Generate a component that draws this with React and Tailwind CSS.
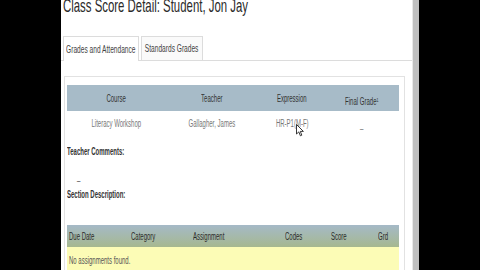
const T = ({ children, className = "" }) => (
  <span className={"inline-block whitespace-nowrap scale-x-[0.6] " + className}>{children}</span>
);

const Cursor = () => (
  <svg className="absolute left-[229px] top-[13px]" width="8" height="13" viewBox="0 0 8 13">
    <path d="M0.5 0.5 L0.5 10 L2.8 7.9 L4.4 11.8 L5.8 11.2 L4.3 7.4 L7.4 7.4 Z" fill="#fff" stroke="#222" strokeWidth="0.9" strokeLinejoin="round" />
  </svg>
);

export default function App() {
  return (
    <div className="w-[480px] h-[270px] bg-black flex overflow-hidden" style={{ fontFamily: '"Liberation Sans", Arial, sans-serif' }}>
      <div className="w-[61px] shrink-0" />

      <div className="w-[352px] shrink-0 bg-white flex flex-col border-r border-[#e8e8e8]">
        {/* title */}
        <div className="h-[19px] leading-[19px] -mt-[4px] pl-[2px] text-[19px] text-[#2a2a2a]">
          <T className="origin-left">Class Score Detail: Student, Jon Jay</T>
        </div>

        {/* tabs */}
        <div className="mt-[22px] flex items-end h-[24px] border-b border-[#dcdcdc]">
          <div className="ml-[2px] w-[76px] h-[25px] -mb-px bg-white border border-b-0 border-[#dcdcdc] flex items-center justify-center text-[11px] text-[#444]">
            <T className="origin-center">Grades and Attendance</T>
          </div>
          <div className="ml-[2px] w-[62px] h-[24px] bg-[#fafafa] border border-b-0 border-[#dcdcdc] flex items-center justify-center text-[11px] text-[#444]">
            <T className="origin-center">Standards Grades</T>
          </div>
        </div>

        {/* panel */}
        <div className="mt-[15px] ml-[3px] w-[341px] flex-1 border border-b-0 border-[#e2e2e2] pt-[8px] pl-[2px]">
          <div className="w-[332px]">
            <div className="grid grid-cols-[98px_94px_66px_74px] h-[26px] bg-[#a7bbc8] text-[10px] text-[#333]">
              <div className="flex items-center justify-center"><T className="origin-center">Course</T></div>
              <div className="flex items-center justify-center"><T className="origin-center">Teacher</T></div>
              <div className="flex items-center justify-center"><T className="origin-center">Expression</T></div>
              <div className="flex items-center justify-center pt-[6px]">
                <T className="origin-center">Final Grade<sup className="text-[6px]">1</sup></T>
              </div>
            </div>
            <div className="relative grid grid-cols-[98px_94px_66px_74px] h-[20px] pt-[3px] text-[10px] text-[#777]">
              <div className="flex items-center justify-center"><T className="origin-center">Literacy Workshop</T></div>
              <div className="flex items-center justify-center"><T className="origin-center">Gallagher, James</T></div>
              <div className="flex items-center justify-center"><T className="origin-center">HR-P1(M-F)</T></div>
              <div className="flex items-center justify-center pt-[3px]"><T className="origin-center">_</T></div>
              <Cursor />
            </div>
          </div>

          <div className="mt-[15px] h-[12px] leading-[12px] text-[10px] font-bold text-[#333]">
            <T className="origin-left">Teacher Comments:</T>
          </div>
          <div className="mt-[13px] h-[12px] leading-[12px] pl-[10px] text-[10px] text-[#555]">
            <T className="origin-left">_</T>
          </div>
          <div className="mt-[6px] h-[12px] leading-[12px] text-[10px] font-bold text-[#333]">
            <T className="origin-left">Section Description:</T>
          </div>

          <div className="mt-[24px] w-[332px]">
            <div className="grid grid-cols-[62px_62px_92px_46px_47px_23px] h-[22px] bg-gradient-to-b from-[#a5b9c7] to-[#a6b88f] text-[10px] text-[#2a2a2a]">
              <div className="flex items-center pl-[2px]"><T className="origin-left">Due Date</T></div>
              <div className="flex items-center pl-[2px]"><T className="origin-left">Category</T></div>
              <div className="flex items-center pl-[2px]"><T className="origin-left">Assignment</T></div>
              <div className="flex items-center pl-[2px]"><T className="origin-left">Codes</T></div>
              <div className="flex items-center pl-[2px]"><T className="origin-left">Score</T></div>
              <div className="flex items-center pl-[2px]"><T className="origin-left">Grd</T></div>
            </div>
            <div className="h-[26px] bg-[#fcfcb6] flex items-start pt-[6px] pl-[2px] text-[10px] text-[#555]">
              <T className="origin-left">No assignments found.</T>
            </div>
          </div>
        </div>
      </div>

      <div className="w-[6px] shrink-0 bg-[#bfbfbf]" />
      <div className="flex-1" />
    </div>
  );
}
